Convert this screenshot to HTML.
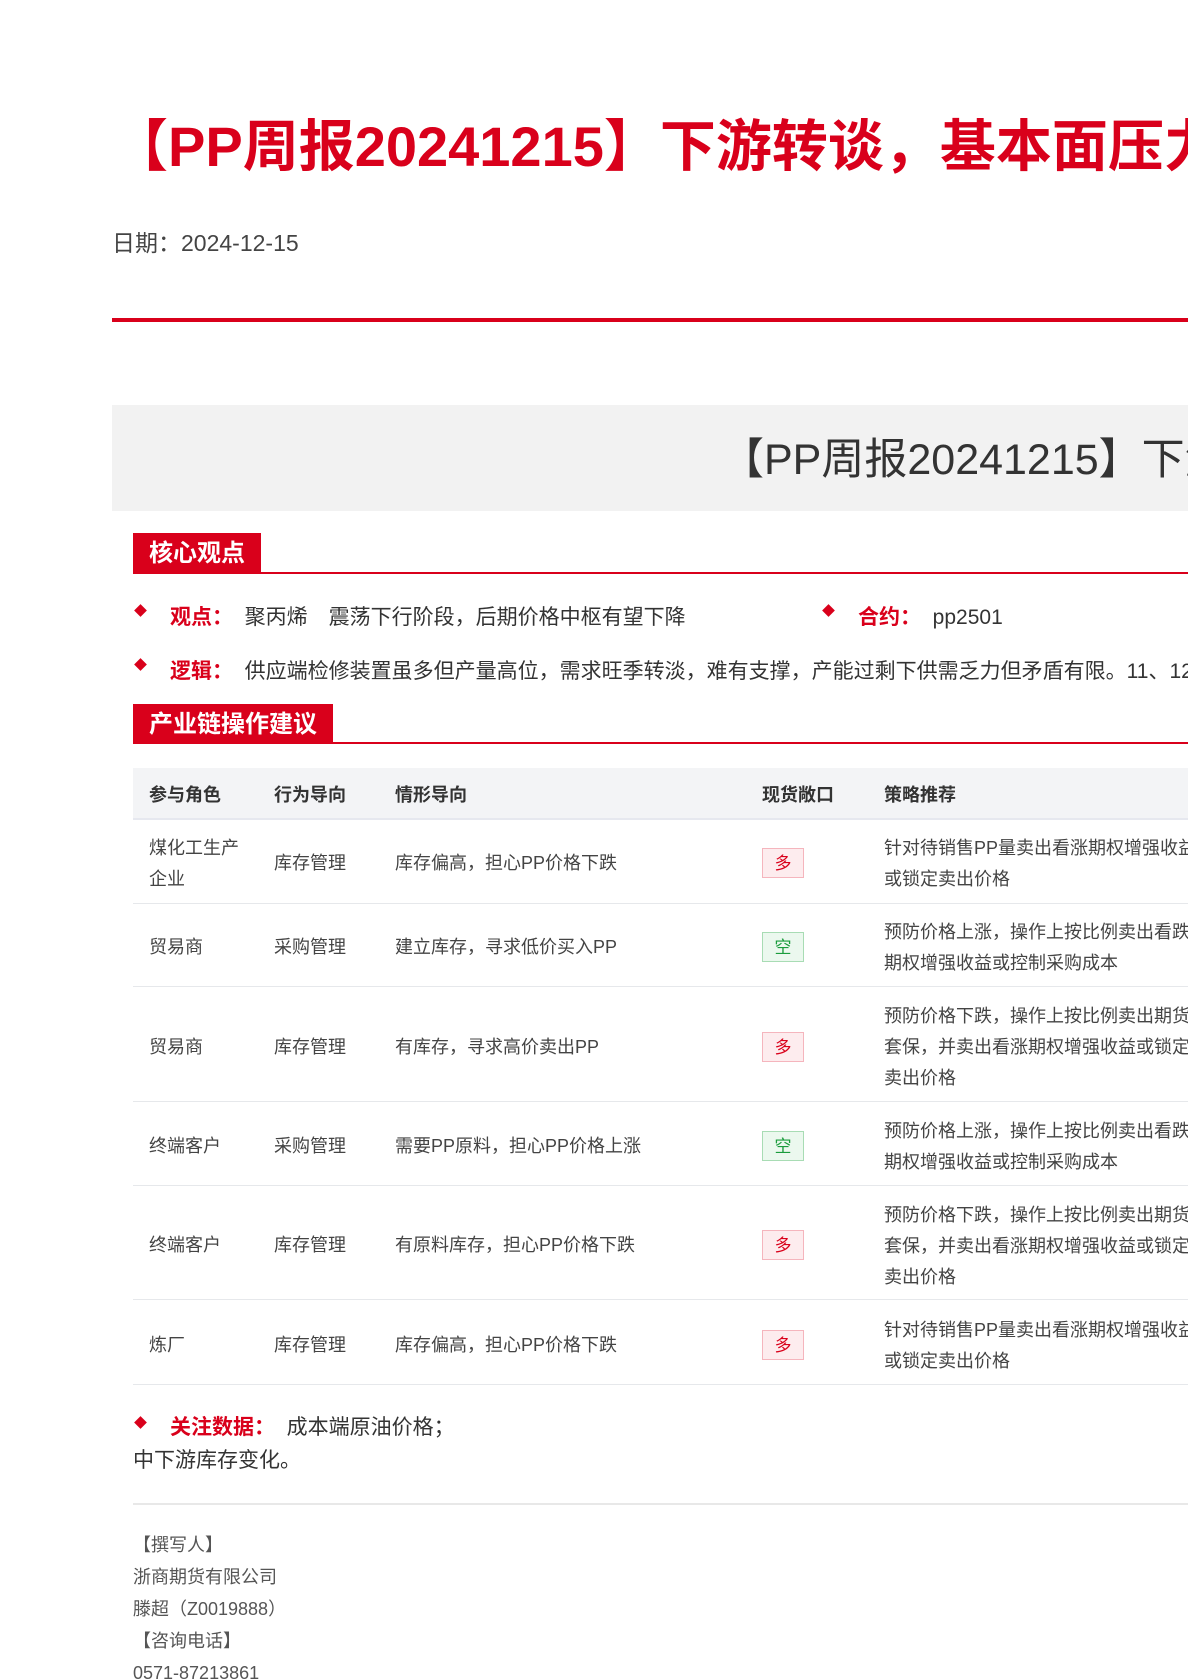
<!DOCTYPE html>
<html><head><meta charset="utf-8"><style>
*{margin:0;padding:0;box-sizing:border-box}
html,body{width:1188px;height:1680px;overflow:hidden;background:#fff}
body{position:relative;font-family:"Liberation Sans","Noto Sans CJK SC",sans-serif;color:#333}
#w{position:absolute;left:0;top:0;width:1188px;height:1680px;overflow:hidden}
.a{position:absolute;white-space:nowrap}
.red{color:#d9001b}
.tab{position:absolute;background:#d9001b;color:#fff;font-size:24px;font-weight:bold;padding:0 16px;height:40px;line-height:42px}
.hl{position:absolute;left:133px;right:0;height:2px;background:#d9001b}
.dia{position:absolute;width:9px;height:9px;background:#d9001b;transform:rotate(45deg)}
.t{position:absolute;font-size:18px;color:#444;white-space:nowrap;line-height:31px}
.th{font-weight:bold;color:#333}
.row{position:absolute;left:133px;right:0;border-bottom:1px solid #e6e8eb}
.b{position:absolute;width:42px;height:30px;font-size:17px;text-align:center;line-height:30px;left:762px}
.d{background:#fdecee;border:1px solid #f5b5bd;color:#d9001b}
.k{background:#ebf8ee;border:1px solid #a8dcb4;color:#1a9c3c}
</style></head><body><div id="w">
<div class="a red" style="left:112px;top:112px;font-size:56px;font-weight:bold;line-height:70px">【PP周报20241215】下游转谈，基本面压力仍存</div>
<div class="a" style="left:112px;top:224px;font-size:23px;color:#444">日期：2024-12-15</div>
<div class="a" style="left:112px;top:318px;right:0;height:4px;background:#d9001b"></div>
<div class="a" style="left:112px;top:405px;right:0;height:106px;background:#f2f2f2"></div>
<div class="a" style="left:721px;top:434px;font-size:43px;color:#333;line-height:52px">【PP周报20241215】下游转谈，基本面压力仍存</div>

<div class="tab" style="left:133px;top:533px">核心观点</div>
<div class="hl" style="top:572px"></div>
<div class="dia" style="left:136px;top:606px"></div>
<div class="a" style="left:170px;top:601px;font-size:21px"><b class="red">观点：</b>&nbsp;&nbsp;聚丙烯　震荡下行阶段，后期价格中枢有望下降</div>
<div class="dia" style="left:824px;top:606px"></div>
<div class="a" style="left:858px;top:601px;font-size:21px"><b class="red">合约：</b>&nbsp;&nbsp;pp2501</div>
<div class="dia" style="left:136px;top:660px"></div>
<div class="a" style="left:170px;top:655px;font-size:21px"><b class="red">逻辑：</b>&nbsp;&nbsp;供应端检修装置虽多但产量高位，需求旺季转淡，难有支撑，产能过剩下供需乏力但矛盾有限。11、12月</div>

<div class="tab" style="left:133px;top:704px">产业链操作建议</div>
<div class="hl" style="top:742px"></div>

<div class="row" style="top:768px;height:52px;background:#f3f4f6;border-bottom:2px solid #e6e8ef"></div>
<div class="t th" style="left:149px;top:780px">参与角色</div>
<div class="t th" style="left:274px;top:780px">行为导向</div>
<div class="t th" style="left:395px;top:780px">情形导向</div>
<div class="t th" style="left:762px;top:780px">现货敞口</div>
<div class="t th" style="left:884px;top:780px">策略推荐</div>

<div class="row" style="top:820px;height:84px"></div>
<div class="t" style="left:149px;top:833px">煤化工生产<br>企业</div><div class="t" style="left:274px;top:848px">库存管理</div><div class="t" style="left:395px;top:848px">库存偏高，担心PP价格下跌</div><div class="b d" style="top:848px">多</div><div class="t" style="left:884px;top:833px">针对待销售PP量卖出看涨期权增强收益<br>或锁定卖出价格</div>

<div class="row" style="top:904px;height:83px"></div>
<div class="t" style="left:149px;top:932px">贸易商</div><div class="t" style="left:274px;top:932px">采购管理</div><div class="t" style="left:395px;top:932px">建立库存，寻求低价买入PP</div><div class="b k" style="top:932px">空</div><div class="t" style="left:884px;top:917px">预防价格上涨，操作上按比例卖出看跌<br>期权增强收益或控制采购成本</div>

<div class="row" style="top:987px;height:115px"></div>
<div class="t" style="left:149px;top:1032px">贸易商</div><div class="t" style="left:274px;top:1032px">库存管理</div><div class="t" style="left:395px;top:1032px">有库存，寻求高价卖出PP</div><div class="b d" style="top:1032px">多</div><div class="t" style="left:884px;top:1001px">预防价格下跌，操作上按比例卖出期货<br>套保，并卖出看涨期权增强收益或锁定<br>卖出价格</div>

<div class="row" style="top:1102px;height:84px"></div>
<div class="t" style="left:149px;top:1131px">终端客户</div><div class="t" style="left:274px;top:1131px">采购管理</div><div class="t" style="left:395px;top:1131px">需要PP原料，担心PP价格上涨</div><div class="b k" style="top:1131px">空</div><div class="t" style="left:884px;top:1116px">预防价格上涨，操作上按比例卖出看跌<br>期权增强收益或控制采购成本</div>

<div class="row" style="top:1186px;height:114px"></div>
<div class="t" style="left:149px;top:1230px">终端客户</div><div class="t" style="left:274px;top:1230px">库存管理</div><div class="t" style="left:395px;top:1230px">有原料库存，担心PP价格下跌</div><div class="b d" style="top:1230px">多</div><div class="t" style="left:884px;top:1200px">预防价格下跌，操作上按比例卖出期货<br>套保，并卖出看涨期权增强收益或锁定<br>卖出价格</div>

<div class="row" style="top:1300px;height:85px"></div>
<div class="t" style="left:149px;top:1330px">炼厂</div><div class="t" style="left:274px;top:1330px">库存管理</div><div class="t" style="left:395px;top:1330px">库存偏高，担心PP价格下跌</div><div class="b d" style="top:1330px">多</div><div class="t" style="left:884px;top:1315px">针对待销售PP量卖出看涨期权增强收益<br>或锁定卖出价格</div>

<div class="dia" style="left:136px;top:1418px"></div>
<div class="a" style="left:170px;top:1411px;font-size:21px"><b class="red">关注数据：</b>&nbsp;&nbsp;成本端原油价格；</div>
<div class="a" style="left:133px;top:1444px;font-size:21px">中下游库存变化。</div>
<div class="a" style="left:133px;top:1503px;right:0;height:2px;background:#e8e8e8"></div>
<div class="a" style="left:133px;top:1529px;font-size:18px;color:#555;line-height:32px;white-space:normal">【撰写人】<br>浙商期货有限公司<br>滕超（Z0019888）<br>【咨询电话】<br>0571-87213861</div>
</div></body></html>
